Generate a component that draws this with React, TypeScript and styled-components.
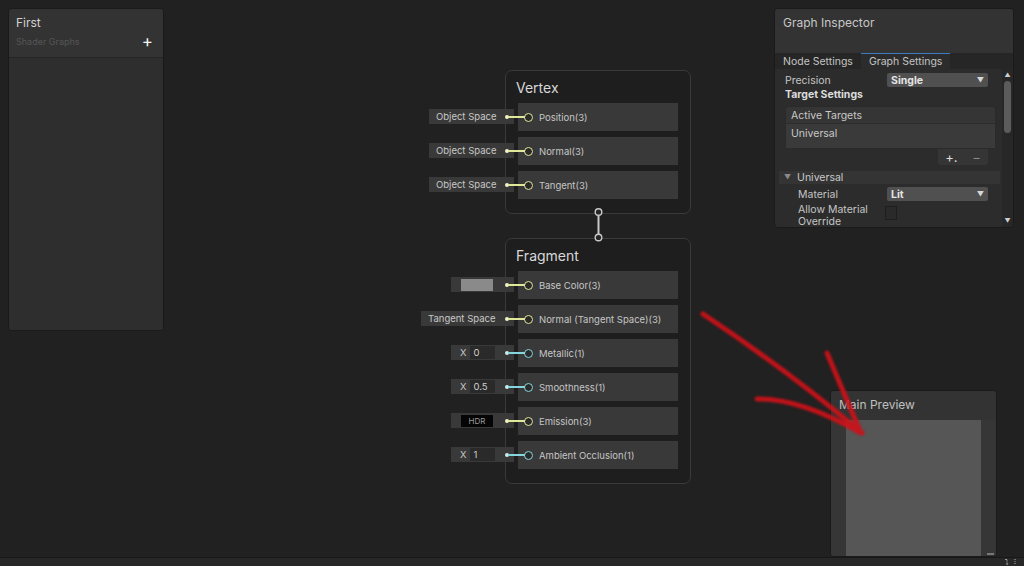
import React from 'react';
import styled, { createGlobalStyle } from 'styled-components';

const GlobalStyle = createGlobalStyle`
  html, body {
    margin: 0;
    padding: 0;
    background: #212121;
    font-family: Inter, "Noto Sans", "Liberation Sans", sans-serif;
    overflow: hidden;
  }
  * { box-sizing: border-box; }
`;

const VEC3 = '#dfe79a';
const FLOAT = '#84d6dc';

const Main = styled.div`
  width: 1024px;
  height: 566px;
  display: flex;
  flex-direction: column;
  background: #212121;
`;

const GraphArea = styled.div`
  flex: 1;
  position: relative;
  overflow: hidden;
`;

const StatusBar = styled.div`
  height: 9px;
  border-top: 1px solid #181818;
  background: #272727;
  display: flex;
  justify-content: flex-end;
  align-items: center;
  gap: 5px;
  padding-right: 8px;
  color: #d0d0d0;
  font-size: 7px;
  line-height: 8px;
`;

/* floating windows */
const Window = styled.div<{ $x: number; $y: number; $w: number; $h: number }>`
  position: absolute;
  left: ${({ $x }) => $x}px;
  top: ${({ $y }) => $y}px;
  width: ${({ $w }) => $w}px;
  height: ${({ $h }) => $h}px;
  border-radius: 4px;
  background: #2c2c2c;
  border: 1px solid #1a1a1a;
  display: flex;
  flex-direction: column;
  overflow: hidden;
`;

const BoardHeader = styled.div`
  height: 49px;
  background: #333333;
  border-bottom: 1px solid #262626;
  padding: 6px 7px;
  display: flex;
  flex-direction: column;
  gap: 5px;
`;

const BoardTitle = styled.div`
  font-size: 12px;
  color: #d2d2d2;
`;

const BoardSub = styled.div`
  display: flex;
  justify-content: space-between;
  align-items: center;
  font-size: 9px;
  color: #555;
`;

const PlusIcon = styled.span`
  color: #f4f4f4;
  font-size: 17px;
  font-weight: 400;
  line-height: 12px;
  margin-right: 3px;
`;

const BoardBody = styled.div`
  flex: 1;
  background: #2e2e2e;
`;

/* inspector */
const InspHeader = styled.div`
  height: 44px;
  background: #333333;
  padding: 6px 8px;
  font-size: 12px;
  color: #c8c8c8;
`;

const TabBar = styled.div`
  height: 16px;
  background: #262626;
  display: flex;
  align-items: stretch;
`;

const Tab = styled.div<{ $active?: boolean }>`
  padding: 0 8px;
  font-size: 10.5px;
  line-height: 15px;
  color: #c4c4c4;
  background: ${({ $active }) => ($active ? '#2c2c2c' : 'transparent')};
  border-top: 1px solid ${({ $active }) => ($active ? '#3c7bc4' : 'transparent')};
`;

const InspBody = styled.div`
  flex: 1;
  display: flex;
  min-height: 0;
`;

const InspContent = styled.div`
  flex: 1;
  padding: 4px 0 0 4px;
  display: flex;
  flex-direction: column;
  overflow: hidden;
`;

const Scrollbar = styled.div`
  width: 11px;
  background: #272727;
  display: flex;
  flex-direction: column;
  align-items: center;
  padding-top: 2px;
  color: #cfcfcf;
  font-size: 6px;
  line-height: 7px;
`;

const Thumb = styled.div`
  width: 7px;
  height: 52px;
  margin-top: 3px;
  border-radius: 4px;
  background: #5b5b5b;
`;

const ScrollDown = styled.div`
  margin-top: auto;
  margin-bottom: 3px;
`;

const PropRow = styled.div<{ $indent?: number; $top?: number }>`
  display: flex;
  align-items: center;
  height: 15px;
  margin-top: ${({ $top }) => $top ?? 0}px;
  padding-left: ${({ $indent }) => $indent ?? 6}px;
  font-size: 10.5px;
  color: #c4c4c4;
`;

const PropLabel = styled.div<{ $w?: number }>`
  width: ${({ $w }) => $w ?? 102}px;
  flex-shrink: 0;
`;

const Dropdown = styled.div`
  width: 102px;
  height: 14px;
  margin-left: auto;
  margin-right: 14px;
  background: #505050;
  border-radius: 2px;
  padding: 0 4px;
  display: flex;
  justify-content: space-between;
  align-items: center;
  font-size: 10.5px;
  font-weight: 700;
  color: #e4e4e4;
`;

const Caret = styled.span`
  font-size: 7px;
  color: #d8d8d8;
`;

const SectionTitle = styled.div`
  font-size: 10.5px;
  font-weight: 700;
  color: #dcdcdc;
  padding: 1px 6px 0;
  height: 16px;
`;

const TargetList = styled.div`
  margin: 5px 6px 0 6px;
  display: flex;
  flex-direction: column;
`;

const ListBox = styled.div`
  background: #353535;
  border: 1px solid #2a2a2a;
  border-radius: 3px;
  display: flex;
  flex-direction: column;
`;

const ListHeader = styled.div`
  height: 17px;
  padding: 2px 5px;
  font-size: 10.5px;
  color: #c8c8c8;
  border-bottom: 1px solid #2c2c2c;
`;

const ListItem = styled.div`
  height: 24px;
  padding: 3px 5px;
  font-size: 10.5px;
  color: #c8c8c8;
  background: #3a3a3a;
`;

const ListButtons = styled.div`
  align-self: flex-end;
  width: 50px;
  height: 16px;
  margin-right: 8px;
  background: #353535;
  border-radius: 0 0 3px 3px;
  display: flex;
  justify-content: space-around;
  align-items: center;
  font-size: 13px;
  color: #dadada;
  line-height: 10px;
`;

const MinusSign = styled.span`
  color: #8a8a8a;
`;

const Foldout = styled.div`
  margin-top: 6px;
  margin-right: 2px;
  height: 14px;
  background: #343434;
  display: flex;
  align-items: center;
  gap: 6px;
  padding-left: 5px;
  font-size: 10.5px;
  color: #c8c8c8;
`;

const Triangle = styled.span`
  font-size: 7px;
  color: #8a8a8a;
`;

const CheckRow = styled.div`
  display: flex;
  align-items: flex-start;
  padding-left: 19px;
  margin-top: 3px;
  font-size: 10.5px;
  line-height: 12px;
  color: #c4c4c4;
`;

const Checkbox = styled.div`
  width: 12px;
  height: 14px;
  margin-left: -2px;
  margin-top: 2px;
  background: #2a2a2a;
  border: 1px solid #1e1e1e;
`;

/* preview */
const PreviewHeader = styled.div`
  height: 29px;
  background: #333333;
  padding: 6px 8px;
  font-size: 12px;
  color: #c0c0c0;
`;

const PreviewBody = styled.div`
  flex: 1;
  display: flex;
  background: #353535;
`;

const PreviewSide = styled.div`
  width: 15px;
  background: #363636;
  position: relative;
`;

const ResizeGrip = styled.div`
  position: absolute;
  right: 2px;
  bottom: 1px;
  width: 7px;
  height: 2px;
  background: #777;
`;

const PreviewImage = styled.div`
  flex: 1;
  background: #565656;
`;

/* graph nodes */
const Node = styled.div<{ $x: number; $y: number }>`
  position: absolute;
  left: ${({ $x }) => $x}px;
  top: ${({ $y }) => $y}px;
  width: 186px;
  padding: 0 12px 14px 12px;
  background: #1e1e1e;
  border: 1px solid #3a3a3a;
  border-radius: 7px;
  display: flex;
  flex-direction: column;
  gap: 6px;
`;

const NodeTitle = styled.div`
  height: 26px;
  padding-top: 9px;
  margin-left: -2px;
  font-size: 14px;
  line-height: 16px;
  color: #d8d8d8;
`;

const SlotRow = styled.div`
  position: relative;
  height: 28px;
  background: #393939;
  display: flex;
  align-items: center;
  padding-left: 6px;
  gap: 6px;
  font-size: 9.5px;
  color: #c6c6c6;
`;

const Port = styled.div<{ $color: string }>`
  position: relative;
  width: 9px;
  height: 9px;
  border-radius: 50%;
  border: 1.6px solid ${({ $color }) => $color};
  background: #2a2a2a;
  flex-shrink: 0;
  &::before {
    content: '';
    position: absolute;
    right: 100%;
    top: 2px;
    width: 17px;
    height: 2px;
    background: ${({ $color }) => $color};
  }
`;

const Field = styled.div<{ $w: number }>`
  position: absolute;
  right: calc(100% + 4px);
  top: 6px;
  width: ${({ $w }) => $w}px;
  height: 15px;
  background: #393939;
  display: flex;
  align-items: center;
  padding: 0 5px 0 7px;
  gap: 6px;
  font-size: 9.5px;
  color: #c8c8c8;
  white-space: nowrap;
`;

const FieldDot = styled.span<{ $color: string }>`
  width: 4px;
  height: 4px;
  border-radius: 50%;
  background: ${({ $color }) => $color};
  margin-left: auto;
  flex-shrink: 0;
`;

const XLabel = styled.span`
  color: #c8c8c8;
  margin-left: 2px;
`;

const NumBox = styled.span`
  width: 25px;
  height: 13px;
  background: #2a2a2a;
  padding-left: 3px;
  line-height: 13px;
  color: #d0d0d0;
  margin-left: -2px;
`;

const Swatch = styled.span<{ $bg: string }>`
  width: 32px;
  height: 12px;
  margin-left: 3px;
  background: ${({ $bg }) => $bg};
  color: #9a9a9a;
  font-size: 8px;
  line-height: 12px;
  text-align: center;
`;

const Overlay = styled.svg`
  position: absolute;
  left: 0;
  top: 0;
  pointer-events: none;
`;

type Input =
  | { kind: 'text'; text: string; w: number }
  | { kind: 'num'; value: string }
  | { kind: 'swatch'; bg: string; label?: string };

type Slot = { name: string; color: string; input: Input };

const dotColor = (color: string) => (color === FLOAT ? '#c8eef0' : '#f2f4c8');

const renderInput = (input: Input, color: string) => {
  switch (input.kind) {
    case 'text':
      return (
        <Field $w={input.w}>
          {input.text}
          <FieldDot $color={dotColor(color)} />
        </Field>
      );
    case 'num':
      return (
        <Field $w={63}>
          <XLabel>X</XLabel>
          <NumBox>{input.value}</NumBox>
          <FieldDot $color={dotColor(color)} />
        </Field>
      );
    default:
      return (
        <Field $w={63}>
          <Swatch $bg={input.bg}>{input.label}</Swatch>
          <FieldDot $color={dotColor(color)} />
        </Field>
      );
  }
};

const vertexSlots: Slot[] = [
  { name: 'Position(3)', color: VEC3, input: { kind: 'text', text: 'Object Space', w: 85 } },
  { name: 'Normal(3)', color: VEC3, input: { kind: 'text', text: 'Object Space', w: 85 } },
  { name: 'Tangent(3)', color: VEC3, input: { kind: 'text', text: 'Object Space', w: 85 } },
];

const fragmentSlots: Slot[] = [
  { name: 'Base Color(3)', color: VEC3, input: { kind: 'swatch', bg: '#8a8a8a' } },
  { name: 'Normal (Tangent Space)(3)', color: VEC3, input: { kind: 'text', text: 'Tangent Space', w: 93 } },
  { name: 'Metallic(1)', color: FLOAT, input: { kind: 'num', value: '0' } },
  { name: 'Smoothness(1)', color: FLOAT, input: { kind: 'num', value: '0.5' } },
  { name: 'Emission(3)', color: VEC3, input: { kind: 'swatch', bg: '#050505', label: 'HDR' } },
  { name: 'Ambient Occlusion(1)', color: FLOAT, input: { kind: 'num', value: '1' } },
];

const MasterNode = ({ title, x, y, slots }: { title: string; x: number; y: number; slots: Slot[] }) => (
  <Node $x={x} $y={y}>
    <NodeTitle>{title}</NodeTitle>
    {slots.map((s) => (
      <SlotRow key={s.name}>
        {renderInput(s.input, s.color)}
        <Port $color={s.color} />
        {s.name}
      </SlotRow>
    ))}
  </Node>
);

const App = () => {
  return (
    <Main>
      <GlobalStyle />
      <GraphArea>
        <Window $x={8} $y={8} $w={156} $h={323}>
          <BoardHeader>
            <BoardTitle>First</BoardTitle>
            <BoardSub>
              Shader Graphs
              <PlusIcon>+</PlusIcon>
            </BoardSub>
          </BoardHeader>
          <BoardBody />
        </Window>

        <MasterNode title="Vertex" x={505} y={70} slots={vertexSlots} />
        <MasterNode title="Fragment" x={505} y={238} slots={fragmentSlots} />

        <Overlay width="1024" height="557">
          <line x1="598.5" y1="215" x2="598.5" y2="234" stroke="#c8c8c8" strokeWidth="2" />
          <circle cx="598.5" cy="212" r="3.3" fill="#262626" stroke="#c8c8c8" strokeWidth="1.4" />
          <circle cx="598.5" cy="237.5" r="3.3" fill="#262626" stroke="#c8c8c8" strokeWidth="1.4" />
        </Overlay>

        <Window $x={774} $y={8} $w={240} $h={220}>
          <InspHeader>Graph Inspector</InspHeader>
          <TabBar>
            <Tab>Node Settings</Tab>
            <Tab $active>Graph Settings</Tab>
          </TabBar>
          <InspBody>
            <InspContent>
              <PropRow>
                <PropLabel>Precision</PropLabel>
                <Dropdown>
                  Single<Caret>▼</Caret>
                </Dropdown>
              </PropRow>
              <SectionTitle>Target Settings</SectionTitle>
              <TargetList>
                <ListBox>
                  <ListHeader>Active Targets</ListHeader>
                  <ListItem>Universal</ListItem>
                </ListBox>
                <ListButtons>
                  <span>+.</span>
                  <MinusSign>−</MinusSign>
                </ListButtons>
              </TargetList>
              <Foldout>
                <Triangle>▼</Triangle>Universal
              </Foldout>
              <PropRow $indent={19} $top={3}>
                <PropLabel $w={89}>Material</PropLabel>
                <Dropdown>
                  Lit<Caret>▼</Caret>
                </Dropdown>
              </PropRow>
              <CheckRow>
                <PropLabel $w={89}>
                  Allow Material
                  <br />
                  Override
                </PropLabel>
                <Checkbox />
              </CheckRow>
            </InspContent>
            <Scrollbar>
              ▲
              <Thumb />
              <ScrollDown>▼</ScrollDown>
            </Scrollbar>
          </InspBody>
        </Window>

        <Window $x={830} $y={390} $w={167} $h={167}>
          <PreviewHeader>Main Preview</PreviewHeader>
          <PreviewBody>
            <PreviewSide />
            <PreviewImage />
            <PreviewSide>
              <ResizeGrip />
            </PreviewSide>
          </PreviewBody>
        </Window>

        <Overlay width="1024" height="557" style={{ filter: 'blur(0.8px)' }}>
          <g fill="none" stroke="#cc1219" strokeWidth="5" strokeLinecap="round" opacity="0.92">
            <path d="M703 314 Q 790 372 862 433" />
            <path d="M827 353 Q 846 398 860 431" />
            <path d="M757 399 Q 800 398 861 433" />
          </g>
        </Overlay>
      </GraphArea>
      <StatusBar>
        <span>⤵</span>
        <span>⁝</span>
      </StatusBar>
    </Main>
  );
};

export default App;
